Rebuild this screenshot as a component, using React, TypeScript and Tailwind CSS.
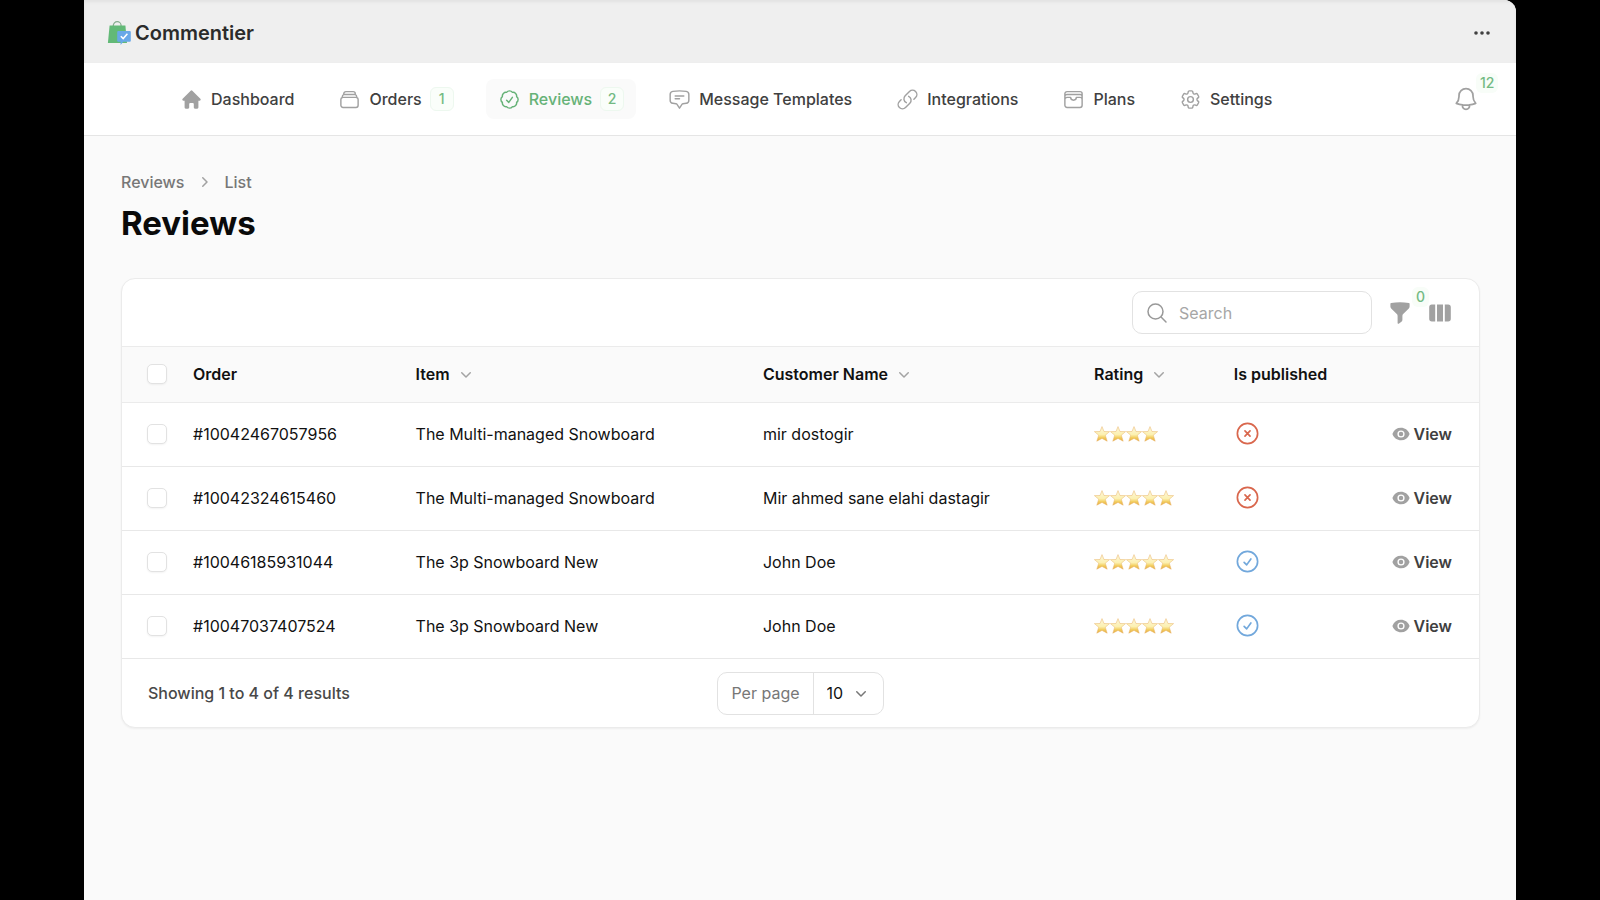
import React from 'react';
import type { IconType } from 'react-icons';
import {
  HiMiniChevronDown,
  HiMiniChevronRight,
  HiMiniEye,
  HiMiniFunnel,
  HiMiniHome,
  HiMiniViewColumns,
  HiOutlineBell,
  HiOutlineChatBubbleBottomCenterText,
  HiOutlineCheckBadge,
  HiOutlineCheckCircle,
  HiOutlineCog6Tooth,
  HiOutlineLink,
  HiOutlineMagnifyingGlass,
  HiOutlineRectangleStack,
  HiOutlineWallet,
  HiOutlineXCircle
} from 'react-icons/hi2';

interface NavItem {
  label: string;
  icon: IconType;
  badge?: number;
  active?: boolean;
}

interface Review {
  order: string;
  item: string;
  customer: string;
  rating: number;
  published: boolean;
}

const navItems: NavItem[] = [
  { label: 'Dashboard', icon: HiMiniHome },
  { label: 'Orders', icon: HiOutlineRectangleStack, badge: 1 },
  { label: 'Reviews', icon: HiOutlineCheckBadge, badge: 2, active: true },
  { label: 'Message Templates', icon: HiOutlineChatBubbleBottomCenterText },
  { label: 'Integrations', icon: HiOutlineLink },
  { label: 'Plans', icon: HiOutlineWallet },
  { label: 'Settings', icon: HiOutlineCog6Tooth }
];

const reviews: Review[] = [
  { order: '#10042467057956', item: 'The Multi-managed Snowboard', customer: 'mir dostogir', rating: 4, published: false },
  { order: '#10042324615460', item: 'The Multi-managed Snowboard', customer: 'Mir ahmed sane elahi dastagir', rating: 5, published: false },
  { order: '#10046185931044', item: 'The 3p Snowboard New', customer: 'John Doe', rating: 5, published: true },
  { order: '#10047037407524', item: 'The 3p Snowboard New', customer: 'John Doe', rating: 5, published: true }
];

const Logo = () => (
  <svg viewBox="0 0 24 24" className="size-6" aria-hidden="true">
    <path d="M6.3 5.5V4.6a3.9 3.9 0 0 1 7.8 0v.9" fill="none" stroke="#86ad8e" strokeWidth="1.3" />
    <path d="M2.6 4.5h15.8L20 22H.9z" fill="#62b977" />
    <path d="M11.2 10h11.6a1 1 0 0 1 1 1v8.8a1 1 0 0 1-1 1h-6.6L13.6 24v-3.2h-2.4a1 1 0 0 1-1-1V11a1 1 0 0 1 1-1z" fill="#68a8e8" />
    <path d="m13.8 15.2 2.4 2.4 4.2-4.8" fill="none" stroke="#fff" strokeWidth="1.5" />
  </svg>
);

const Star = () => (
  <svg viewBox="0 0 16 16" className="size-4">
    <defs>
      <linearGradient id="star" x1="0" y1="0" x2="0" y2="1">
        <stop offset="0.1" stopColor="#fdf6d6" />
        <stop offset="0.55" stopColor="#fcf0b0" />
        <stop offset="0.75" stopColor="#f3cf62" />
        <stop offset="1" stopColor="#e5a83f" />
      </linearGradient>
    </defs>
    <path
      d="M8 .6l2 4.9 5.6.1-4.3 3.6 1.9 6L8 12.4l-5.2 2.8 1.9-6L.4 5.6 6 5.5z"
      fill="url(#star)"
      stroke="#e9b568"
      strokeWidth="0.5"
      strokeLinejoin="round"
    />
  </svg>
);

const Checkbox = ({ label }: { label: string }) => (
  <input
    type="checkbox"
    aria-label={label}
    className="block size-5 appearance-none rounded-[5px] border border-[#e2e2e2] bg-white shadow-xs"
  />
);

const SortButton = ({ label }: { label: string }) => (
  <button type="button" className="flex items-center gap-1.5 font-semibold">
    {label}
    <HiMiniChevronDown className="size-5 text-[#a3a3a3]" />
  </button>
);

const Navigation = () => (
  <nav className="flex h-[73px] items-center border-b border-[#e5e5e5] bg-white pr-9 pl-[84px]">
    <ul className="flex flex-1 items-center gap-5">
      {navItems.map(({ label, icon: Icon, badge, active }) => (
        <li key={label}>
          <a
            href="#"
            className={`flex h-10 items-center gap-2 rounded-lg px-3 font-medium whitespace-nowrap ${
              active ? 'bg-[#fafafa] text-[#66b277]' : 'text-[#404040]'
            }`}
          >
            <Icon className={`size-[23px] ${active ? 'text-[#66b277]' : 'text-[#a1a1a1]'}`} />
            {label}
            {badge && (
              <span className="flex size-6 items-center justify-center rounded-md border border-[#edf8ef] bg-[#fafefa] text-sm text-[#73ba83]">
                {badge}
              </span>
            )}
          </a>
        </li>
      ))}
    </ul>
    <button type="button" aria-label="Notifications" className="relative text-[#a1a1a1]">
      <HiOutlineBell className="size-7" />
      <span className="absolute -top-3 left-6 rounded-md bg-[#f8fdf8] px-1 text-sm font-medium text-[#73ba83]">12</span>
    </button>
  </nav>
);

const TableToolbar = () => (
  <div className="flex h-[67px] items-center justify-end pr-[27px]">
    <label className="flex h-[43px] w-60 items-center gap-2 rounded-[10px] border border-[#e2e2e2] px-3">
      <HiOutlineMagnifyingGlass className="size-6 shrink-0 text-[#999]" />
      <input
        type="search"
        aria-label="Search"
        placeholder="Search"
        className="w-full min-w-0 bg-transparent pl-0.5 outline-none placeholder:text-[#a6a6a6]"
      />
    </label>
    <button type="button" aria-label="Filter" className="relative ml-4 text-[#a1a1a1]">
      <HiMiniFunnel className="size-6" />
      <span className="absolute -top-3.5 left-6 rounded-md bg-[#f8fdf8] px-1 text-sm font-medium text-[#73ba83]">0</span>
    </button>
    <button type="button" aria-label="Toggle columns" className="ml-4 text-[#a1a1a1]">
      <HiMiniViewColumns className="size-6" />
    </button>
  </div>
);

const ReviewsTable = () => (
  <table className="w-full table-fixed border-collapse text-left text-[#111]">
    <thead>
      <tr className="h-14 border-y border-[#ebebeb] bg-[#fafafa]">
        <th className="w-[57px] pb-0.5 pl-[25px]">
          <Checkbox label="Select all reviews" />
        </th>
        <th className="w-[16.4%] px-3.5 pb-0.5 font-semibold">Order</th>
        <th className="w-[25.6%] px-3.5 pb-0.5">
          <SortButton label="Item" />
        </th>
        <th className="w-[24.4%] px-3.5 pb-0.5">
          <SortButton label="Customer Name" />
        </th>
        <th className="w-[10.3%] px-3.5 pb-0.5">
          <SortButton label="Rating" />
        </th>
        <th className="w-[10%] px-3.5 pb-0.5 font-semibold whitespace-nowrap">Is published</th>
        <th aria-label="Actions" />
      </tr>
    </thead>
    <tbody>
      {reviews.map((review) => (
        <tr key={review.order} className="h-16 border-b border-[#e8e8e8]">
          <td className="pb-0.5 pl-[25px]">
            <Checkbox label={`Select ${review.order}`} />
          </td>
          <td className="px-3.5 pb-0.5">{review.order}</td>
          <td className="px-3.5 pb-0.5">{review.item}</td>
          <td className="px-3.5 pb-0.5">{review.customer}</td>
          <td className="px-3.5 pb-0.5">
            <div className="flex" role="img" aria-label={`${review.rating} stars`}>
              {Array.from({ length: review.rating }, (_, i) => (
                <Star key={i} />
              ))}
            </div>
          </td>
          <td className="px-3.5 pb-0.5">
            {review.published ? (
              <HiOutlineCheckCircle className="size-[27px] text-[#72a8dc]" />
            ) : (
              <HiOutlineXCircle className="size-[27px] text-[#d9674d]" />
            )}
          </td>
          <td className="pr-[27px] pb-0.5">
            <a href="#" className="flex items-center justify-end gap-1 font-semibold text-[#404040]">
              <HiMiniEye className="size-[18px] text-[#a1a1a1]" />
              View
            </a>
          </td>
        </tr>
      ))}
    </tbody>
  </table>
);

const TableFooter = () => (
  <div className="grid h-17 grid-cols-[1fr_auto_1fr] items-center px-[26px]">
    <span className="font-medium text-[#484848]">Showing 1 to 4 of 4 results</span>
    <div className="flex h-[43px] items-center rounded-[10px] border border-[#e2e2e2]">
      <label htmlFor="per-page" className="flex h-full items-center border-r border-[#e2e2e2] px-[13px] text-[#777]">
        Per page
      </label>
      <div className="grid h-full items-center">
        <select
          id="per-page"
          defaultValue="10"
          className="col-start-1 row-start-1 h-full w-[69px] appearance-none bg-transparent pl-[13px] text-[#111] outline-none"
        >
          <option>10</option>
          <option>25</option>
          <option>50</option>
        </select>
        <HiMiniChevronDown className="pointer-events-none col-start-1 row-start-1 mr-3 size-5 justify-self-end text-[#777]" />
      </div>
    </div>
  </div>
);

export default function App() {
  return (
    <div className="min-h-screen bg-black px-[84px] font-[Inter,sans-serif] text-base">
      <div className="min-h-screen overflow-hidden rounded-tr-xl bg-[#fafafa]">
        <header className="flex h-[63px] items-center justify-between bg-[#efefef] pt-0.5 pr-6 pl-[23px] shadow-[inset_0_2px_3px_#e2e2e2]">
          <div className="flex items-center gap-1 text-xl font-semibold text-[#2b2b2b]">
            <Logo />
            Commentier
          </div>
          <button type="button" aria-label="More actions">
            <svg viewBox="0 0 20 20" className="size-5" fill="#404040">
              <circle cx="4" cy="10" r="1.8" />
              <circle cx="10" cy="10" r="1.8" />
              <circle cx="16" cy="10" r="1.8" />
            </svg>
          </button>
        </header>
        <Navigation />
        <main className="pt-[34px] pr-9 pl-[37px]">
          <div className="flex items-center gap-2.5 font-medium text-[#777]">
            <a href="#">Reviews</a>
            <HiMiniChevronRight className="size-5 text-[#a1a1a1]" />
            <a href="#">List</a>
          </div>
          <h1 className="mt-[9px] text-[33px] leading-10 font-bold text-[#0a0a0a]">Reviews</h1>
          <section className="mt-[35px] rounded-[14px] border border-[#ebebeb] bg-white shadow-xs">
            <TableToolbar />
            <ReviewsTable />
            <TableFooter />
          </section>
        </main>
      </div>
    </div>
  );
}
